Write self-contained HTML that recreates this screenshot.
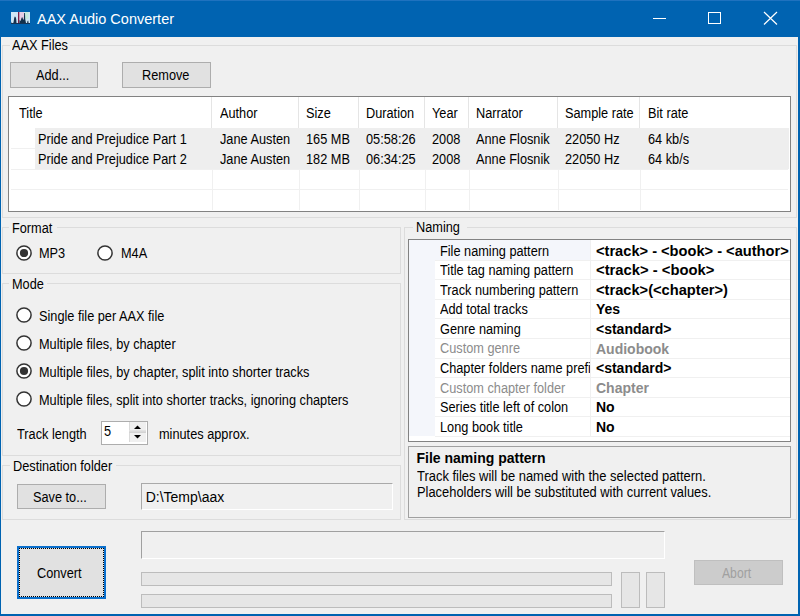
<!DOCTYPE html>
<html><head><meta charset="utf-8"><style>
html,body{margin:0;padding:0;}
body{width:800px;height:616px;background:#f0f0f0;position:relative;overflow:hidden;font-family:"Liberation Sans",sans-serif;}
body>div{position:absolute;}
.t{white-space:pre;}
</style></head><body>
<div style="left:0px;top:0px;width:800px;height:37px;background:#0063b1"></div>
<div style="left:0px;top:0px;width:800px;height:1px;background:#1f72bf"></div>
<div style="left:0px;top:37px;width:1px;height:579px;background:#0063b1"></div>
<div style="left:798px;top:37px;width:2px;height:579px;background:#0063b1"></div>
<div style="left:0px;top:614px;width:800px;height:2px;background:#0063b1"></div>
<svg style="position:absolute;left:11px;top:12px" width="19" height="12" viewBox="0 0 19 12">
<rect x="0" y="0" width="19" height="12" fill="#cfe6f6"/>
<rect x="8" y="0" width="5" height="8" fill="#e6cde6"/>
<rect x="13.5" y="0" width="4" height="7" fill="#c4eadf"/>
<path d="M0 12 L0 9.5 L0.8 12 Z" fill="#13304e"/>
<path d="M1.8 12 L2.6 10 L3.2 6 L3.8 4.5 L4.6 5 L5.2 7 L5.6 12 Z" fill="#14324f"/>
<rect x="7" y="0" width="1.3" height="12" fill="#7c1f47"/>
<path d="M8.3 12 L8.6 8 L9.6 9 L10.5 6 L11.2 5 L12 7 L12.8 8 L13.2 1 L14 1 L14.2 7 L15.2 12 Z" fill="#12304c"/>
<path d="M15.8 12 L16.5 9 L17.2 8.5 L17.8 12 Z" fill="#14324f"/>
<path d="M0 12 L0 11 L19 11 L19 12 Z" fill="#163456"/>
</svg>
<div class="t" style="left:37px;top:10.98px;font-size:14.5px;line-height:16px;font-weight:normal;color:#fff;">AAX Audio Converter</div>
<div style="left:653px;top:18px;width:13px;height:1px;background:#fff"></div>
<div style="left:708px;top:12px;width:11px;height:10px;border:1px solid #fff"></div>
<svg style="position:absolute;left:763px;top:11px" width="15" height="15" viewBox="0 0 15 15">
<path d="M1 1 L14 13.5 M14 1 L1 13.5" stroke="#fff" stroke-width="1.2"/></svg>
<div style="left:2px;top:45px;width:795px;height:1px;background:#dcdcdc"></div>
<div style="left:2px;top:45px;width:1px;height:173px;background:#dcdcdc"></div>
<div style="left:796px;top:45px;width:1px;height:173px;background:#dcdcdc"></div>
<div style="left:2px;top:217px;width:795px;height:1px;background:#dcdcdc"></div>
<div style="left:10px;top:45px;width:60px;height:2px;background:#f0f0f0"></div>
<div class="t" style="left:12px;top:37.45px;font-size:14px;line-height:16px;font-weight:normal;color:#000;transform:scaleX(0.91);transform-origin:0 0;">AAX Files</div>
<div style="left:10px;top:62px;width:88px;height:26px;background:#e1e1e1;border:1px solid #adadad;box-sizing:border-box"></div>
<div class="t" style="left:36px;top:66.65px;font-size:14px;line-height:16px;font-weight:normal;color:#000;transform:scaleX(0.91);transform-origin:0 0;">Add...</div>
<div style="left:122px;top:62px;width:89px;height:26px;background:#e1e1e1;border:1px solid #adadad;box-sizing:border-box"></div>
<div class="t" style="left:142px;top:66.65px;font-size:14px;line-height:16px;font-weight:normal;color:#000;transform:scaleX(0.91);transform-origin:0 0;">Remove</div>
<div style="left:8px;top:96px;width:783px;height:116px;background:#fff;border:1px solid #828282;box-sizing:border-box"></div>
<div style="left:211px;top:97px;width:1px;height:31px;background:#e5e5e5"></div>
<div style="left:212px;top:128px;width:1px;height:82px;background:#f0f0f0"></div>
<div style="left:298px;top:97px;width:1px;height:31px;background:#e5e5e5"></div>
<div style="left:299px;top:128px;width:1px;height:82px;background:#f0f0f0"></div>
<div style="left:358px;top:97px;width:1px;height:31px;background:#e5e5e5"></div>
<div style="left:359px;top:128px;width:1px;height:82px;background:#f0f0f0"></div>
<div style="left:424px;top:97px;width:1px;height:31px;background:#e5e5e5"></div>
<div style="left:425px;top:128px;width:1px;height:82px;background:#f0f0f0"></div>
<div style="left:468px;top:97px;width:1px;height:31px;background:#e5e5e5"></div>
<div style="left:469px;top:128px;width:1px;height:82px;background:#f0f0f0"></div>
<div style="left:557px;top:97px;width:1px;height:31px;background:#e5e5e5"></div>
<div style="left:558px;top:128px;width:1px;height:82px;background:#f0f0f0"></div>
<div style="left:639px;top:97px;width:1px;height:31px;background:#e5e5e5"></div>
<div style="left:640px;top:128px;width:1px;height:82px;background:#f0f0f0"></div>
<div class="t" style="left:18.7px;top:104.65px;font-size:14px;line-height:16px;font-weight:normal;color:#000;transform:scaleX(0.91);transform-origin:0 0;">Title</div>
<div class="t" style="left:219.5px;top:104.65px;font-size:14px;line-height:16px;font-weight:normal;color:#000;transform:scaleX(0.91);transform-origin:0 0;">Author</div>
<div class="t" style="left:306px;top:104.65px;font-size:14px;line-height:16px;font-weight:normal;color:#000;transform:scaleX(0.91);transform-origin:0 0;">Size</div>
<div class="t" style="left:366px;top:104.65px;font-size:14px;line-height:16px;font-weight:normal;color:#000;transform:scaleX(0.91);transform-origin:0 0;">Duration</div>
<div class="t" style="left:432px;top:104.65px;font-size:14px;line-height:16px;font-weight:normal;color:#000;transform:scaleX(0.91);transform-origin:0 0;">Year</div>
<div class="t" style="left:475.5px;top:104.65px;font-size:14px;line-height:16px;font-weight:normal;color:#000;transform:scaleX(0.91);transform-origin:0 0;">Narrator</div>
<div class="t" style="left:565px;top:104.65px;font-size:14px;line-height:16px;font-weight:normal;color:#000;transform:scaleX(0.91);transform-origin:0 0;">Sample rate</div>
<div class="t" style="left:647.5px;top:104.65px;font-size:14px;line-height:16px;font-weight:normal;color:#000;transform:scaleX(0.91);transform-origin:0 0;">Bit rate</div>
<div style="left:11px;top:148px;width:777px;height:1px;background:#f0f0f0"></div>
<div style="left:11px;top:169px;width:777px;height:1px;background:#f0f0f0"></div>
<div style="left:11px;top:189px;width:777px;height:1px;background:#f0f0f0"></div>
<div style="left:35px;top:128px;width:754px;height:41px;background:#eeeeee"></div>
<div class="t" style="left:38px;top:130.75px;font-size:14px;line-height:16px;font-weight:normal;color:#000;transform:scaleX(0.91);transform-origin:0 0;">Pride and Prejudice Part 1</div>
<div class="t" style="left:219.5px;top:130.75px;font-size:14px;line-height:16px;font-weight:normal;color:#000;transform:scaleX(0.91);transform-origin:0 0;">Jane Austen</div>
<div class="t" style="left:306px;top:130.75px;font-size:14px;line-height:16px;font-weight:normal;color:#000;transform:scaleX(0.91);transform-origin:0 0;">165 MB</div>
<div class="t" style="left:366px;top:130.75px;font-size:14px;line-height:16px;font-weight:normal;color:#000;transform:scaleX(0.91);transform-origin:0 0;">05:58:26</div>
<div class="t" style="left:432px;top:130.75px;font-size:14px;line-height:16px;font-weight:normal;color:#000;transform:scaleX(0.91);transform-origin:0 0;">2008</div>
<div class="t" style="left:475.5px;top:130.75px;font-size:14px;line-height:16px;font-weight:normal;color:#000;transform:scaleX(0.91);transform-origin:0 0;">Anne Flosnik</div>
<div class="t" style="left:565px;top:130.75px;font-size:14px;line-height:16px;font-weight:normal;color:#000;transform:scaleX(0.91);transform-origin:0 0;">22050 Hz</div>
<div class="t" style="left:647.5px;top:130.75px;font-size:14px;line-height:16px;font-weight:normal;color:#000;transform:scaleX(0.91);transform-origin:0 0;">64 kb/s</div>
<div class="t" style="left:38px;top:151.25px;font-size:14px;line-height:16px;font-weight:normal;color:#000;transform:scaleX(0.91);transform-origin:0 0;">Pride and Prejudice Part 2</div>
<div class="t" style="left:219.5px;top:151.25px;font-size:14px;line-height:16px;font-weight:normal;color:#000;transform:scaleX(0.91);transform-origin:0 0;">Jane Austen</div>
<div class="t" style="left:306px;top:151.25px;font-size:14px;line-height:16px;font-weight:normal;color:#000;transform:scaleX(0.91);transform-origin:0 0;">182 MB</div>
<div class="t" style="left:366px;top:151.25px;font-size:14px;line-height:16px;font-weight:normal;color:#000;transform:scaleX(0.91);transform-origin:0 0;">06:34:25</div>
<div class="t" style="left:432px;top:151.25px;font-size:14px;line-height:16px;font-weight:normal;color:#000;transform:scaleX(0.91);transform-origin:0 0;">2008</div>
<div class="t" style="left:475.5px;top:151.25px;font-size:14px;line-height:16px;font-weight:normal;color:#000;transform:scaleX(0.91);transform-origin:0 0;">Anne Flosnik</div>
<div class="t" style="left:565px;top:151.25px;font-size:14px;line-height:16px;font-weight:normal;color:#000;transform:scaleX(0.91);transform-origin:0 0;">22050 Hz</div>
<div class="t" style="left:647.5px;top:151.25px;font-size:14px;line-height:16px;font-weight:normal;color:#000;transform:scaleX(0.91);transform-origin:0 0;">64 kb/s</div>
<div style="left:2px;top:227px;width:399px;height:1px;background:#dcdcdc"></div>
<div style="left:2px;top:227px;width:1px;height:47px;background:#dcdcdc"></div>
<div style="left:400px;top:227px;width:1px;height:47px;background:#dcdcdc"></div>
<div style="left:2px;top:273px;width:399px;height:1px;background:#dcdcdc"></div>
<div style="left:9.3px;top:226px;width:48px;height:3px;background:#f0f0f0"></div>
<div class="t" style="left:12.3px;top:219.85px;font-size:14px;line-height:16px;font-weight:normal;color:#000;transform:scaleX(0.91);transform-origin:0 0;">Format</div>
<svg style="position:absolute;left:13.8px;top:243px" width="20" height="20"><circle cx="10" cy="10" r="7.1" fill="#fff" stroke="#333" stroke-width="1.5"/><circle cx="10" cy="10" r="4.1" fill="#333"/></svg>
<div class="t" style="left:38.8px;top:245.15px;font-size:14px;line-height:16px;font-weight:normal;color:#000;transform:scaleX(0.91);transform-origin:0 0;">MP3</div>
<svg style="position:absolute;left:95px;top:243px" width="20" height="20"><circle cx="10" cy="10" r="7.1" fill="#fff" stroke="#333" stroke-width="1.5"/></svg>
<div class="t" style="left:120.5px;top:245.15px;font-size:14px;line-height:16px;font-weight:normal;color:#000;transform:scaleX(0.91);transform-origin:0 0;">M4A</div>
<div style="left:2px;top:283px;width:399px;height:1px;background:#dcdcdc"></div>
<div style="left:2px;top:283px;width:1px;height:173px;background:#dcdcdc"></div>
<div style="left:400px;top:283px;width:1px;height:173px;background:#dcdcdc"></div>
<div style="left:2px;top:455px;width:399px;height:1px;background:#dcdcdc"></div>
<div style="left:9.3px;top:282px;width:38px;height:3px;background:#f0f0f0"></div>
<div class="t" style="left:12.3px;top:275.85px;font-size:14px;line-height:16px;font-weight:normal;color:#000;transform:scaleX(0.91);transform-origin:0 0;">Mode</div>
<svg style="position:absolute;left:13.8px;top:305px" width="20" height="20"><circle cx="10" cy="10" r="7.1" fill="#fff" stroke="#333" stroke-width="1.5"/></svg>
<div class="t" style="left:38.8px;top:307.65px;font-size:14px;line-height:16px;font-weight:normal;color:#000;transform:scaleX(0.91);transform-origin:0 0;">Single file per AAX file</div>
<svg style="position:absolute;left:13.8px;top:333px" width="20" height="20"><circle cx="10" cy="10" r="7.1" fill="#fff" stroke="#333" stroke-width="1.5"/></svg>
<div class="t" style="left:38.8px;top:335.65px;font-size:14px;line-height:16px;font-weight:normal;color:#000;transform:scaleX(0.91);transform-origin:0 0;">Multiple files, by chapter</div>
<svg style="position:absolute;left:13.8px;top:361px" width="20" height="20"><circle cx="10" cy="10" r="7.1" fill="#fff" stroke="#333" stroke-width="1.5"/><circle cx="10" cy="10" r="4.1" fill="#333"/></svg>
<div class="t" style="left:38.8px;top:363.65px;font-size:14px;line-height:16px;font-weight:normal;color:#000;transform:scaleX(0.91);transform-origin:0 0;">Multiple files, by chapter, split into shorter tracks</div>
<svg style="position:absolute;left:13.8px;top:389px" width="20" height="20"><circle cx="10" cy="10" r="7.1" fill="#fff" stroke="#333" stroke-width="1.5"/></svg>
<div class="t" style="left:38.8px;top:391.65px;font-size:14px;line-height:16px;font-weight:normal;color:#000;transform:scaleX(0.91);transform-origin:0 0;">Multiple files, split into shorter tracks, ignoring chapters</div>
<div class="t" style="left:17px;top:425.95px;font-size:14px;line-height:16px;font-weight:normal;color:#000;transform:scaleX(0.91);transform-origin:0 0;">Track length</div>
<div style="left:101px;top:421px;width:47px;height:24px;background:#fff;border:1px solid #adadad;box-sizing:border-box"></div>
<div class="t" style="left:103.6px;top:423.15px;font-size:14px;line-height:16px;font-weight:normal;color:#000;transform:scaleX(0.91);transform-origin:0 0;">5</div>
<div style="left:129px;top:422px;width:17px;height:20px;background:#f0f0f0;border-left:1px solid #dadada;box-sizing:border-box"></div>
<div style="left:129px;top:430px;width:17px;height:3px;background:linear-gradient(#e6e6e6,#cfcfcf)"></div>
<svg style="position:absolute;left:129px;top:422px" width="17" height="20"><path d="M5 7 L8.5 3.5 L12 7 Z" fill="#000"/><path d="M5 13 L8.5 16.5 L12 13 Z" fill="#000"/></svg>
<div class="t" style="left:158.8px;top:425.95px;font-size:14px;line-height:16px;font-weight:normal;color:#000;transform:scaleX(0.91);transform-origin:0 0;">minutes approx.</div>
<div style="left:2px;top:465px;width:399px;height:1px;background:#dcdcdc"></div>
<div style="left:2px;top:465px;width:1px;height:55px;background:#dcdcdc"></div>
<div style="left:400px;top:465px;width:1px;height:55px;background:#dcdcdc"></div>
<div style="left:2px;top:519px;width:399px;height:1px;background:#dcdcdc"></div>
<div style="left:9.6px;top:464px;width:106px;height:3px;background:#f0f0f0"></div>
<div class="t" style="left:12.6px;top:457.85px;font-size:14px;line-height:16px;font-weight:normal;color:#000;transform:scaleX(0.91);transform-origin:0 0;">Destination folder</div>
<div style="left:17px;top:484px;width:89px;height:25px;background:#e1e1e1;border:1px solid #adadad;box-sizing:border-box"></div>
<div class="t" style="left:33px;top:488.65px;font-size:14px;line-height:16px;font-weight:normal;color:#000;transform:scaleX(0.91);transform-origin:0 0;">Save to...</div>
<div style="left:141px;top:483px;width:252px;height:27px;background:#f0f0f0;border-top:1px solid #a9a9a9;border-left:1px solid #a9a9a9;border-right:1px solid #fff;border-bottom:1px solid #fff;box-sizing:border-box"></div>
<div class="t" style="left:145.7px;top:489.15px;font-size:14px;line-height:16px;font-weight:normal;color:#000;">D:\Temp\aax</div>
<div style="left:404px;top:227px;width:393px;height:1px;background:#dcdcdc"></div>
<div style="left:404px;top:227px;width:1px;height:293px;background:#dcdcdc"></div>
<div style="left:796px;top:227px;width:1px;height:293px;background:#dcdcdc"></div>
<div style="left:404px;top:519px;width:393px;height:1px;background:#dcdcdc"></div>
<div style="left:413px;top:226px;width:54px;height:3px;background:#f0f0f0"></div>
<div class="t" style="left:416px;top:218.85px;font-size:14px;line-height:16px;font-weight:normal;color:#000;transform:scaleX(0.91);transform-origin:0 0;">Naming</div>
<div style="left:408px;top:239px;width:383px;height:203px;background:#fff;border:1px solid #828282;box-sizing:border-box"></div>
<div style="left:409px;top:240px;width:26px;height:196px;background:#f4f6fb"></div>
<div style="left:435px;top:240px;width:155px;height:20px;background:#f4f6fb"></div>
<div style="left:435px;top:260px;width:355px;height:1px;background:#f0f0f0"></div>
<div class="t" style="left:440px;top:242.65px;font-size:14px;line-height:16px;font-weight:normal;color:#000;transform:scaleX(0.91);transform-origin:0 0;">File naming pattern</div>
<div class="t" style="left:596px;top:242.75px;font-size:14px;line-height:16px;font-weight:bold;color:#000;transform:scaleX(1.045);transform-origin:0 0;">&lt;track&gt; - &lt;book&gt; - &lt;author&gt;</div>
<div style="left:435px;top:279px;width:355px;height:1px;background:#f0f0f0"></div>
<div class="t" style="left:440px;top:262.20px;font-size:14px;line-height:16px;font-weight:normal;color:#000;transform:scaleX(0.91);transform-origin:0 0;">Title tag naming pattern</div>
<div class="t" style="left:596px;top:262.30px;font-size:14px;line-height:16px;font-weight:bold;color:#000;transform:scaleX(1.057);transform-origin:0 0;">&lt;track&gt; - &lt;book&gt;</div>
<div style="left:435px;top:299px;width:355px;height:1px;background:#f0f0f0"></div>
<div class="t" style="left:440px;top:281.75px;font-size:14px;line-height:16px;font-weight:normal;color:#000;transform:scaleX(0.91);transform-origin:0 0;">Track numbering pattern</div>
<div class="t" style="left:596px;top:281.85px;font-size:14px;line-height:16px;font-weight:bold;color:#000;transform:scaleX(1.047);transform-origin:0 0;">&lt;track&gt;(&lt;chapter&gt;)</div>
<div style="left:435px;top:318px;width:355px;height:1px;background:#f0f0f0"></div>
<div class="t" style="left:440px;top:301.30px;font-size:14px;line-height:16px;font-weight:normal;color:#000;transform:scaleX(0.91);transform-origin:0 0;">Add total tracks</div>
<div class="t" style="left:596px;top:301.40px;font-size:14px;line-height:16px;font-weight:bold;color:#000;">Yes</div>
<div style="left:435px;top:338px;width:355px;height:1px;background:#f0f0f0"></div>
<div class="t" style="left:440px;top:320.85px;font-size:14px;line-height:16px;font-weight:normal;color:#000;transform:scaleX(0.91);transform-origin:0 0;">Genre naming</div>
<div class="t" style="left:596px;top:320.95px;font-size:14px;line-height:16px;font-weight:bold;color:#000;">&lt;standard&gt;</div>
<div style="left:435px;top:358px;width:355px;height:1px;background:#f0f0f0"></div>
<div class="t" style="left:440px;top:340.40px;font-size:14px;line-height:16px;font-weight:normal;color:#8c8c8c;transform:scaleX(0.91);transform-origin:0 0;">Custom genre</div>
<div class="t" style="left:596px;top:340.50px;font-size:14px;line-height:16px;font-weight:bold;color:#8c8c8c;">Audiobook</div>
<div style="left:435px;top:377px;width:355px;height:1px;background:#f0f0f0"></div>
<div class="t" style="left:440px;top:359.95px;font-size:14px;line-height:16px;font-weight:normal;color:#000;transform:scaleX(0.91);transform-origin:0 0;">Chapter folders name prefi</div>
<div style="left:591px;top:359px;width:198px;height:17px;background:#fff"></div>
<div class="t" style="left:596px;top:360.05px;font-size:14px;line-height:16px;font-weight:bold;color:#000;">&lt;standard&gt;</div>
<div style="left:435px;top:397px;width:355px;height:1px;background:#f0f0f0"></div>
<div class="t" style="left:440px;top:379.50px;font-size:14px;line-height:16px;font-weight:normal;color:#8c8c8c;transform:scaleX(0.91);transform-origin:0 0;">Custom chapter folder</div>
<div class="t" style="left:596px;top:379.60px;font-size:14px;line-height:16px;font-weight:bold;color:#8c8c8c;">Chapter</div>
<div style="left:435px;top:416px;width:355px;height:1px;background:#f0f0f0"></div>
<div class="t" style="left:440px;top:399.05px;font-size:14px;line-height:16px;font-weight:normal;color:#000;transform:scaleX(0.91);transform-origin:0 0;">Series title left of colon</div>
<div class="t" style="left:596px;top:399.15px;font-size:14px;line-height:16px;font-weight:bold;color:#000;">No</div>
<div style="left:435px;top:436px;width:355px;height:1px;background:#f0f0f0"></div>
<div class="t" style="left:440px;top:418.60px;font-size:14px;line-height:16px;font-weight:normal;color:#000;transform:scaleX(0.91);transform-origin:0 0;">Long book title</div>
<div class="t" style="left:596px;top:418.70px;font-size:14px;line-height:16px;font-weight:bold;color:#000;">No</div>
<div style="left:590px;top:240px;width:1px;height:196px;background:#f0f0f0"></div>
<div style="left:408px;top:446px;width:383px;height:72px;background:#f0f0f0;border:1px solid #a0a0a0;box-sizing:border-box"></div>
<div class="t" style="left:416.5px;top:450.15px;font-size:14px;line-height:16px;font-weight:bold;color:#000;">File naming pattern</div>
<div class="t" style="left:416.5px;top:468.35px;font-size:14px;line-height:16px;font-weight:normal;color:#000;transform:scaleX(0.925);transform-origin:0 0;">Track files will be named with the selected pattern.</div>
<div class="t" style="left:416.5px;top:483.65px;font-size:14px;line-height:16px;font-weight:normal;color:#000;transform:scaleX(0.92);transform-origin:0 0;">Placeholders will be substituted with current values.</div>
<div style="left:17px;top:546px;width:89px;height:53px;background:#e1e1e1;border:2px solid #0a6fcc;box-sizing:border-box"></div>
<div style="left:19px;top:548px;width:85px;height:49px;border:1px dotted #000;box-sizing:border-box"></div>
<div class="t" style="left:37px;top:564.75px;font-size:14px;line-height:16px;font-weight:normal;color:#000;transform:scaleX(0.91);transform-origin:0 0;">Convert</div>
<div style="left:141px;top:531px;width:524px;height:28px;background:#f0f0f0;border-top:1px solid #a0a0a0;border-left:1px solid #a0a0a0;border-right:1px solid #fff;border-bottom:1px solid #fff;box-sizing:border-box"></div>
<div style="left:141px;top:572px;width:471px;height:14px;background:#e6e6e6;border:1px solid #bcbcbc;box-sizing:border-box"></div>
<div style="left:141px;top:594px;width:471px;height:14px;background:#e6e6e6;border:1px solid #bcbcbc;box-sizing:border-box"></div>
<div style="left:621px;top:572px;width:19px;height:36px;background:#e6e6e6;border:1px solid #bcbcbc;box-sizing:border-box"></div>
<div style="left:646px;top:572px;width:19px;height:36px;background:#e6e6e6;border:1px solid #bcbcbc;box-sizing:border-box"></div>
<div style="left:694px;top:560px;width:89px;height:25px;background:#cccccc;border:1px solid #bfbfbf;box-sizing:border-box"></div>
<div class="t" style="left:722px;top:564.65px;font-size:14px;line-height:16px;font-weight:normal;color:#a0a0a0;transform:scaleX(0.87);transform-origin:0 0;">Abort</div>
</body></html>
